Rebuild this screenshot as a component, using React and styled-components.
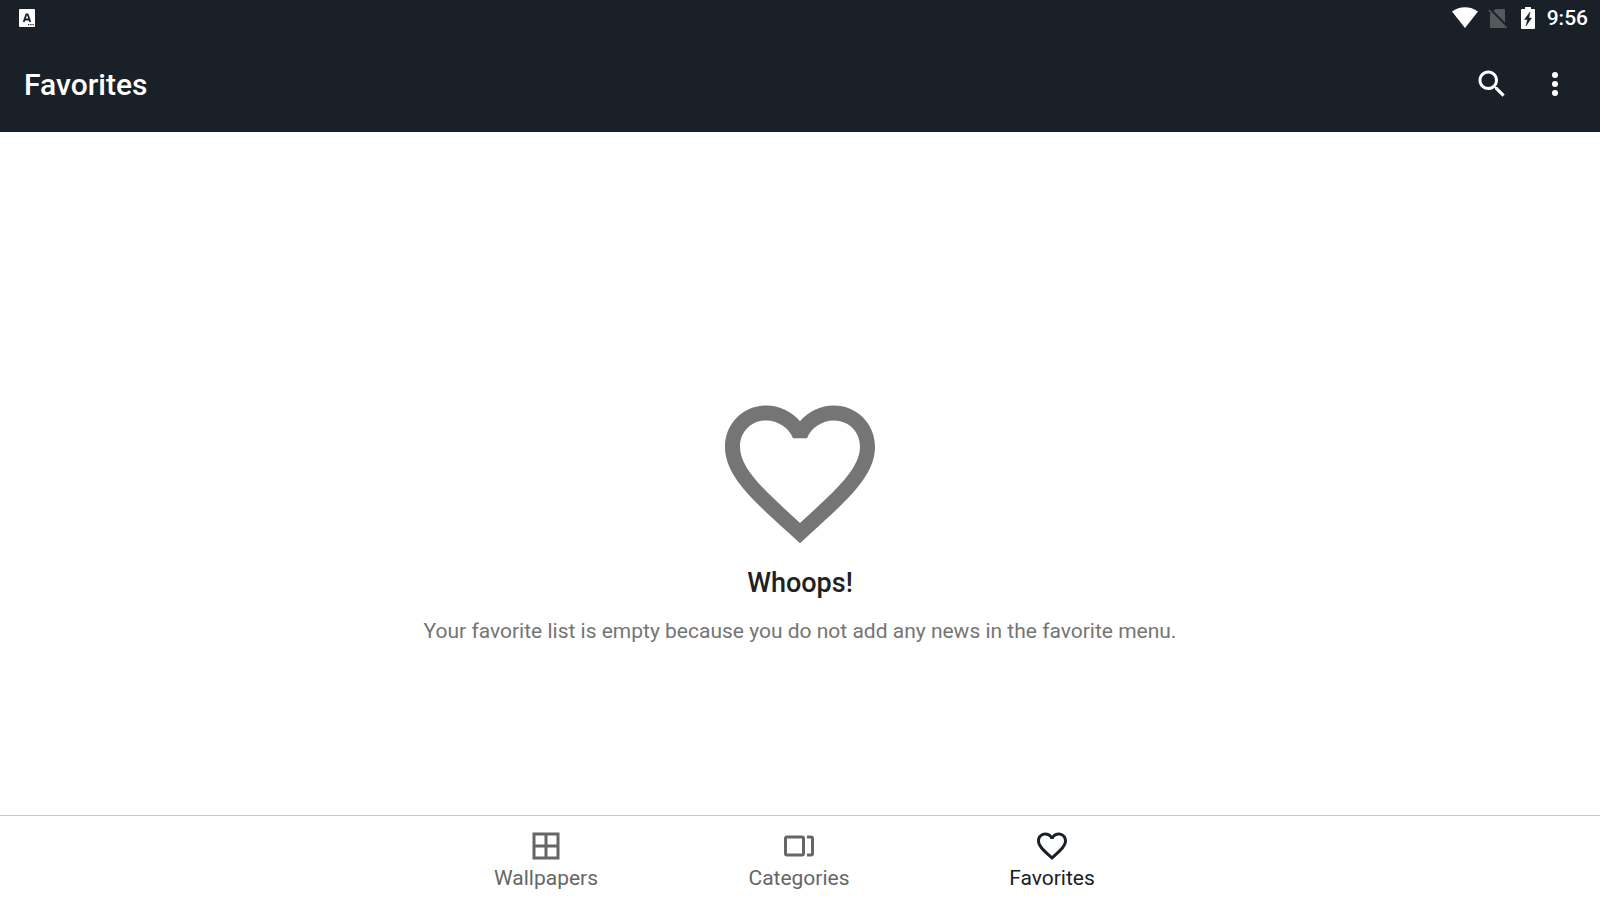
import React, { useState } from "react";
import styled, { createGlobalStyle } from "styled-components";

const tabs = ["Wallpapers", "Categories", "Favorites"];

const HeartPath = () => (
  <path d="M16.5 3c-1.74 0-3.41.81-4.5 2.09C10.91 3.81 9.24 3 7.5 3 4.42 3 2 5.42 2 8.5c0 3.78 3.4 6.86 8.55 11.54L12 21.35l1.45-1.32C18.6 15.36 22 12.28 22 8.5 22 5.42 19.58 3 16.5 3zm-4.4 15.55l-.1.1-.1-.1C7.14 14.24 4 11.39 4 8.5 4 6.5 5.5 5 7.5 5c1.54 0 3.04.99 3.57 2.36h1.87C13.46 5.99 14.96 5 16.5 5c2 0 3.5 1.5 3.5 3.5 0 2.89-3.14 5.74-7.9 10.05z" />
);

const tabIcons = {
  Wallpapers: <path d="M3 3v18h18V3H3zm8 16H5v-6h6v6zm0-8H5V5h6v6zm8 8h-6v-6h6v6zm0-8h-6V5h6v6z" />,
  Categories: (
    <g fill="none" stroke="currentColor" strokeWidth="2">
      <rect x="3" y="6" width="12" height="12" rx="1" />
      <path d="M17.3 6H20a1 1 0 0 1 1 1v10a1 1 0 0 1-1 1h-2.7" />
    </g>
  ),
  Favorites: <HeartPath />,
};

const App = () => {
  const [current, setCurrent] = useState("Favorites");

  return (
    <Screen>
      <GlobalStyle />
      <StatusBar>
        <svg width="16" height="18" viewBox="0 0 16 18" fill="#ffffff">
          <rect width="16" height="18" rx="1" />
          <path d="M4.7 13 7.3 5.300H8.700L11.300 13M5.600 10.500h5" fill="none" stroke="#192027" strokeWidth="1.800" />
          <path d="M9 15h1.300v1.300H9zM11.300 15h1.300v1.300h-1.300zM13.500 15h1.300v1.300h-1.300z" fill="#192027" />
        </svg>
        <StatusIcons>
          <svg width="26" height="22" viewBox="0 0 26 22" fill="#ffffff">
            <path d="M0 4.500C7.500-1.200 18.500-1.200 26 4.500L13 21z" />
          </svg>
          <svg width="20" height="22" viewBox="0 0 20 22">
            <path d="M7.500 2H16a1 1 0 0 1 1 1v17a1 1 0 0 1-1 1H3a1 1 0 0 1-1-1V7z" fill="#55595e" />
            <path d="M2 2.200 19.500 20" stroke="#192027" strokeWidth="2.400" />
            <path d="M.8 3 18.500 21" stroke="#55595e" strokeWidth="1.600" />
          </svg>
          <svg width="14" height="22" viewBox="0 0 14 22">
            <path d="M4 0h6v2h3a1 1 0 0 1 1 1v18a1 1 0 0 1-1 1H1a1 1 0 0 1-1-1V3a1 1 0 0 1 1-1h3z" fill="#ffffff" />
            <path d="M9 5 3.500 12.500h3L5 19l5.500-8H7.800z" fill="#192027" stroke="#192027" strokeWidth=".5" />
          </svg>
          <time>9:56</time>
        </StatusIcons>
      </StatusBar>
      <Toolbar>
        <Title>Favorites</Title>
        <ActionButton aria-label="Search">
          <Icon $size={36} viewBox="0 0 24 24">
            <path d="M15.500 14h-.79l-.28-.27C15.410 12.590 16 11.110 16 9.500 16 5.910 13.090 3 9.500 3S3 5.910 3 9.500 5.910 16 9.500 16c1.610 0 3.090-.59 4.230-1.570l.27.28v.79l5 4.990L20.490 19l-4.990-5zm-6 0C7.010 14 5 11.990 5 9.500S7.010 5 9.500 5 14 7.010 14 9.500 11.990 14 9.500 14z" />
          </Icon>
        </ActionButton>
        <ActionButton aria-label="More options">
          <Icon $size={36} viewBox="0 0 24 24">
            <circle cx="12" cy="6" r="2" />
            <circle cx="12" cy="12" r="2" />
            <circle cx="12" cy="18" r="2" />
          </Icon>
        </ActionButton>
      </Toolbar>
      <Empty>
        <Icon $size={180} viewBox="0 0 24 24">
          <HeartPath />
        </Icon>
        <Whoops>Whoops!</Whoops>
        <Message>
          Your favorite list is empty because you do not add any news in the
          favorite menu.
        </Message>
      </Empty>
      <BottomNav>
        {tabs.map((tab) => (
          <Tab
            key={tab}
            $active={tab === current}
            aria-current={tab === current ? "page" : undefined}
            onClick={() => setCurrent(tab)}
          >
            <Icon $size={36} viewBox="0 0 24 24">
              {tabIcons[tab]}
            </Icon>
            {tab}
          </Tab>
        ))}
      </BottomNav>
    </Screen>
  );
};

const GlobalStyle = createGlobalStyle`
  * {
    box-sizing: border-box;
  }
  body {
    margin: 0;
    font-family: Roboto, sans-serif;
  }
  button {
    padding: 0;
    border: none;
    background: none;
    color: inherit;
    font: inherit;
    cursor: pointer;
  }
`;
const Screen = styled.div`
  display: flex;
  flex-direction: column;
  min-height: 100vh;
  background: #ffffff;
`;
const StatusBar = styled.div`
  display: flex;
  align-items: center;
  justify-content: space-between;
  height: 36px;
  padding: 0 12px 0 19px;
  background: #192027;
  color: #ffffff;
`;
const StatusIcons = styled.div`
  display: flex;
  align-items: center;
  gap: 10px;
  font-size: 21px;
  font-weight: 500;

  svg:nth-of-type(3) {
    margin: 0 2px 0 3px;
  }
`;
const Toolbar = styled.header`
  display: flex;
  align-items: center;
  height: 96px;
  padding: 0 14px 0 24px;
  background: #192027;
  color: #ffffff;
`;
const Title = styled.h1`
  flex: 1;
  margin: 0;
  font-size: 30px;
  font-weight: 500;
`;
const ActionButton = styled.button`
  display: flex;
  align-items: center;
  justify-content: center;
  width: 63px;
  height: 72px;
`;
const Icon = styled.svg`
  display: block;
  width: ${({ $size }) => $size}px;
  height: ${({ $size }) => $size}px;
  fill: currentColor;
`;
const Empty = styled.main`
  flex: 1;
  display: flex;
  flex-direction: column;
  align-items: center;
  justify-content: center;
  padding-top: 80px;
  color: #757575;
`;
const Whoops = styled.h2`
  margin: 2px 0 0;
  color: #212121;
  font-size: 27px;
  font-weight: 500;
  line-height: 36px;
`;
const Message = styled.p`
  margin: 17px 0 0;
  font-size: 21px;
  line-height: 27px;
`;
const BottomNav = styled.nav`
  display: flex;
  justify-content: center;
  height: 85px;
  padding-right: 2px;
  border-top: 1px solid #c8c8c8;
`;
const Tab = styled.button`
  display: flex;
  flex-direction: column;
  align-items: center;
  width: 253px;
  padding-top: 12px;
  color: ${({ $active }) => ($active ? "#192027" : "#666666")};
  font-size: 21px;
  line-height: 29px;
`;

export default App;
